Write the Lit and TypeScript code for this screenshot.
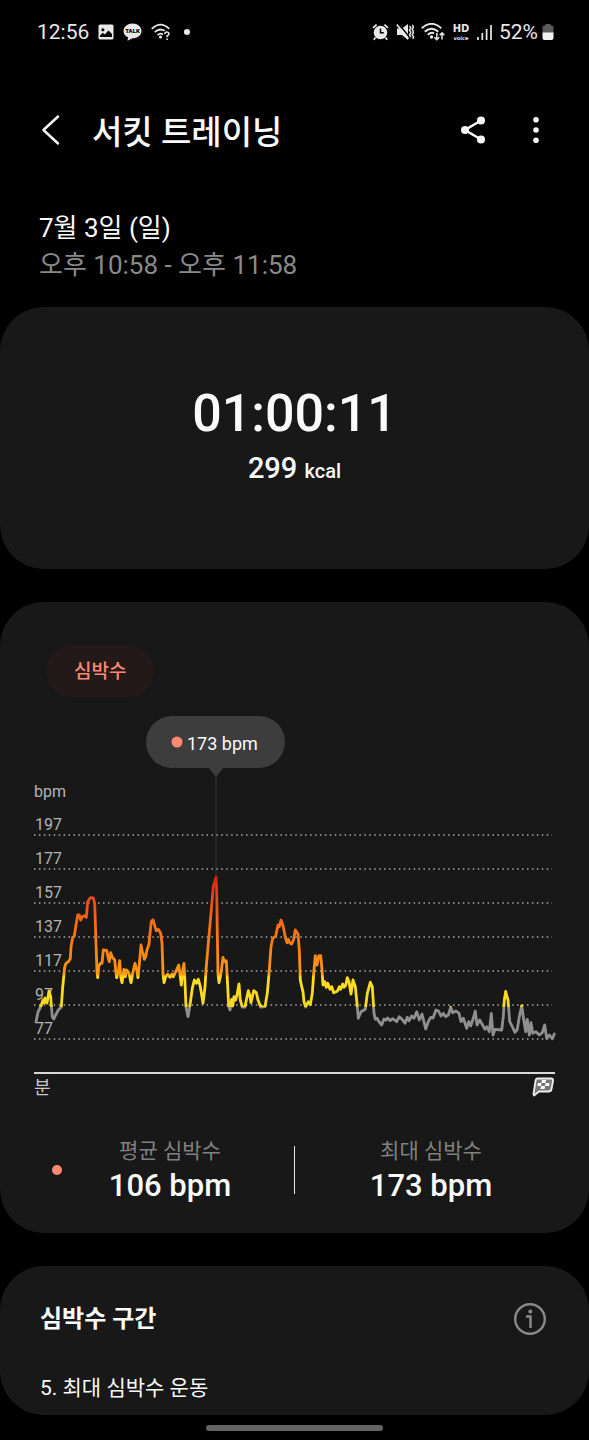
import { LitElement, html, svg, css } from "lit";
import { customElement } from "lit/decorators.js";

const GRID = [197, 177, 157, 137, 117, 97, 77];
const GRID_TOP = 125;
const GRID_STEP = 34;

// Heart rate trace, x/y pairs in chart units.
const TRACE =
  "36,312 38,302 41,296 43,290 44,293 45,288 47,293 49,281 50.7,287 51.3,295 52.3,307 53.7,309 56.7,303 58.3,300 61.3,297 62.7,277 64.7,257 66,253.3 68.3,251.7 70.3,248.7 71,237 72.7,227.3 74.3,226 76,215 77.7,205 79.3,205 80.7,210 82.3,206.7 84.3,205.7 86.3,207.3 87.7,191.7 90.3,187.7 93.3,188 94.7,193.3 96,233.3 97,261.7 97.7,267.7 98.7,256.7 100.3,253.3 102,253.3 103.3,240 106.7,240.3 108,247.3 109.3,251.7 110.7,242.7 112.3,247.3 114.7,250 115.7,260 116.7,267.7 118.3,261.7 119.7,250.7 120.7,266.7 122,272.7 124,259.3 125.3,266.7 126.7,260 129,263.3 131,272.7 132.7,263.3 135,253.3 136.7,260 138,267.7 139.7,250 141,235 142.3,241.7 143.3,244 144.3,249.3 145.7,246.7 147,240 149,234 150,223.3 151.3,211.7 153,209.7 155,216.7 156.3,220.7 158.3,219.3 160.7,223.3 162,233.3 163,263.3 164,272.7 165.7,266.7 167.7,264 170,267.3 172,264 173.3,266.7 175.3,262.7 178.7,255 180.3,266.7 181.3,275 182.7,260 184,253.3 185,273.3 186,296.7 188,306.7 190,295 192.3,278.3 194.3,270 196.3,273.3 198.3,269.3 200.3,276.7 201.7,285 203,293.3 205,277 206,260 208.3,233.3 211,203.3 213.3,176.7 216,167.3 216.7,180 217.3,223.3 218,263.3 219,272.7 221,263.3 223,247.3 224.3,251.7 226.3,250.7 227.7,276.7 228.7,296.7 230,300 231.7,289.3 232.7,296 234,286.7 235.7,290 237.3,283.3 239,274 240.3,290 242.3,297 245,297 246.7,288.3 248.3,280.7 249.7,285 251,292.7 252.3,286.7 253.7,280.7 256.3,282.7 258,290 260.7,297 265,296.7 267.3,283.3 269.3,260 271,236.7 272.7,228.3 275.7,226 278,215 279.3,216.7 281,210 283.3,216.7 285.3,227.3 287,232.7 288.3,229.3 290,233.3 291.7,234 293.7,229.3 295.3,220 298,224 299.3,240 300.3,270 301.7,276.7 303,281.7 304,291.7 305.7,297 308.3,291.7 310.3,294.7 312.3,283.3 313.7,263.3 315.3,245.7 317,255 318.7,246 320.7,245.7 322,260 323,275 324.7,271.7 326.3,277.3 327.7,273.3 330,279.3 331.7,276.7 333.7,282.7 337.3,281.3 339.3,276.7 340.7,279.3 342.7,274 344,277.3 345.7,275.3 347.3,267.7 349,271.7 351,284 353,270 355.3,276.7 357,293.3 358.3,308.3 361,301.7 365.3,299.3 367.3,283.3 370.3,272.3 372.3,276.7 374,303.3 375.3,309.3 377,308.3 379,311.7 381.7,315 384,309 386,310 387.7,308 390,310.7 392.7,308.7 396.7,311.7 399.3,306.7 402.7,310 405,313.3 407.3,307.3 409,310.7 411.7,306 414,308.3 416.7,301.7 419.3,310 422,304 425.7,319 428.3,311.7 430.7,307.3 433,308 436,300 438.7,301.3 441,306 443.3,303.3 445.7,306.7 448.3,305 450.7,297.3 452.7,302.7 456,301 459,303.3 461,311.7 463.3,308.3 466.7,318.3 468.7,311.7 470.7,316 473.3,308.3 475.3,301 477,315 479.7,310 482,314 485,319.3 486.7,316.7 489.3,321.7 491.3,303.3 493,325 495,319.3 501.7,320 503.3,306.7 504.3,290 505.7,281.5 508,290 509.7,311.7 512,316 515,322.3 517.3,319.3 519.3,306.7 521.7,295.7 523.3,306.7 525.7,321.7 527.3,309.3 529.3,325 531,312.7 532.7,323.3 536,321.7 539.3,325 542.3,322.7 544.7,315 546.7,328.3 549.3,325 552.3,328.7 554.3,324";

@customElement("status-bar")
class StatusBar extends LitElement {
  static styles = css`
    :host {
      display: flex;
      align-items: center;
      height: 64px;
      padding: 0 35px 0 37px;
      font-size: 21px;
      line-height: 24px;
      color: #e8e8e8;
    }
    svg {
      display: block;
      flex: none;
    }
    .side {
      display: flex;
      align-items: center;
      gap: 9px;
    }
    .right {
      margin-left: auto;
      gap: 7px;
    }
    .power {
      display: flex;
      align-items: center;
      gap: 4px;
    }
    .dot {
      width: 6px;
      height: 6px;
      border-radius: 50%;
      background: #e8e8e8;
      margin-left: 4px;
    }
    .talk {
      font-family: Roboto, sans-serif;
      font-weight: 900;
    }
    .voice {
      font-family: "DejaVu Sans", sans-serif;
      font-weight: 700;
    }
  `;

  render() {
    return html`
      <div class="side">
        <span>12:56</span>
        <svg width="16" height="18" viewBox="0 0 16 18" aria-hidden="true">
          <path fill="#e8e8e8" fill-rule="evenodd" d="M2 1.500h12q1.500 0 1.500 1.500v12q0 1.500-1.500 1.500H2Q.5 16.500.5 15V3Q.5 1.500 2 1.500zM2 14h12v-3l-3.500-3.500-3.800 4L4.800 9.800 2 12.500zM4.800 5.200a1.600 1.600 0 1 0 .1 0z"/>
        </svg>
        <svg width="19" height="18" viewBox="0 0 19 18" aria-hidden="true">
          <path fill="#e8e8e8" d="M9.500.5C14.600.5 18.500 3.800 18.500 8s-3.900 7.300-9 7.300L4.500 17.800 5 14.300C2.200 13 .5 10.700.5 8 .5 3.800 4.500.5 9.500.5z"/>
          <text class="talk" x="9.500" y="10" font-size="6" text-anchor="middle" fill="#000">TALK</text>
        </svg>
        <svg width="20" height="18" viewBox="0 0 20 18" aria-hidden="true">
          <g fill="none" stroke="#e8e8e8" stroke-width="1.800">
            <path d="M.8 5.800Q9.500-2.600 18.300 5.800M3.800 9.200Q9.500 3.700 15.300 9.200M6.500 12.200Q9.500 9.500 12 11.500"/>
          </g>
          <circle cx="9.500" cy="14" r="1.600" fill="#e8e8e8"/>
          <path fill="none" stroke="#000" stroke-width="4" d="M14 11q.2-2 2-2t2 1.800q0 1.200-1.800 2.200v1"/>
          <path fill="none" stroke="#e8e8e8" stroke-width="1.600" d="M13.800 11q.2-2 2.100-2t2.100 1.800q0 1.200-1.900 2.200v1.200M16.100 15.500v1.600"/>
        </svg>
        <span class="dot"></span>
      </div>
      <div class="side right">
        <svg width="17" height="18" viewBox="0 0 17 18" aria-hidden="true">
          <g fill="none" stroke="#e8e8e8" stroke-width="1.800">
            <path d="M1 4.800 4.600 1.600M16 4.800 12.400 1.600M3.500 14.500 1.800 16.800M13.500 14.500l1.700 2.300"/>
          </g>
          <circle cx="8.500" cy="9.500" r="6.800" fill="#e8e8e8"/>
          <path fill="none" stroke="#000" stroke-width="1.500" d="M8.500 5.500v4.300h3.300"/>
        </svg>
        <svg width="18" height="18" viewBox="0 0 18 18" aria-hidden="true">
          <path fill="#e8e8e8" d="M1 5.500h5L12 1v16l-6-5H1z"/>
          <path stroke="#000" stroke-width="1.500" d="M2.500 1 13 13.500"/>
          <path stroke="#e8e8e8" stroke-width="1.600" d="M.8 1.500 12.500 15.800"/>
          <path fill="none" stroke="#e8e8e8" stroke-width="1.500" d="m13.500 3 1.300 2-1.300 2 1.300 2.300-1.300 2.500 1.300 2.400M16.300 2l1.200 2-1.200 2.500 1.200 2.500-1.200 2.500 1.200 2.500-.8 1.800"/>
        </svg>
        <svg width="24" height="18" viewBox="0 0 24 18" aria-hidden="true">
          <g fill="none" stroke="#e8e8e8" stroke-width="1.900">
            <path d="M.8 5.200Q10.500-3.600 20.300 5.200M3.800 8.700Q10.500 2.600 17.300 8.700M6.700 11.800q3.800-3.200 6.300-1.400"/>
          </g>
          <circle cx="10.500" cy="14" r="1.700" fill="#e8e8e8"/>
          <path fill="none" stroke="#e8e8e8" stroke-width="1.500" d="M15.800 10v6.500M13.300 14.200l2.500 2.500 2.400-2.500M21 16.500V10M18.800 12.200 21 9.800l2.300 2.400"/>
        </svg>
        <svg width="18" height="18" viewBox="0 0 18 18" aria-hidden="true">
          <text class="voice" x="9" y="9" font-size="10" text-anchor="middle" fill="#e8e8e8">HD</text>
          <text class="voice" x="9" y="17" font-size="5" text-anchor="middle" fill="#e8e8e8">voice</text>
        </svg>
        <svg width="15" height="18" viewBox="0 0 15 18" aria-hidden="true">
          <path stroke="#e8e8e8" stroke-width="1.700" d="M1 17v-3M5.300 17v-7M9.600 17V6M14 17V2"/>
        </svg>
        <div class="power">
          <span>52%</span>
          <svg width="12" height="18" viewBox="0 0 12 18" aria-hidden="true">
            <path fill="#5a5a5a" d="M3.500 1h5v1.500H10q1.500 0 1.500 1.500v6H.5V4Q.5 2.500 2 2.500h1.500z"/>
            <path fill="#f2f2f2" d="M.5 9.500h11V15q0 2-2 2h-7q-2 0-2-2z"/>
          </svg>
        </div>
      </div>
    `;
  }
}

@customElement("heart-chart")
class HeartChart extends LitElement {
  static styles = css`
    :host {
      display: block;
    }
    .chart {
      display: block;
      width: 100%;
      height: auto;
      font-family: Roboto, "Noto Sans CJK KR", sans-serif;
    }
    .axis {
      font-size: 16px;
      fill: #b4b4b4;
    }
    .unit {
      font-size: 18px;
      fill: #c8c8c8;
    }
    .tip {
      font-size: 18px;
      fill: #fafafa;
    }
    .grid {
      stroke: #a8a8a8;
      stroke-width: 1.5;
      stroke-dasharray: 1.5 3.43;
    }
    .trace {
      fill: none;
      stroke: url(#zones);
      stroke-width: 2.8;
      stroke-linejoin: round;
      stroke-linecap: round;
    }
  `;

  render() {
    return html`
      <svg class="chart" viewBox="0 0 589 394" role="img" aria-label="심박수">
        <defs>
          <linearGradient id="zones" gradientUnits="userSpaceOnUse" x1="0" y1="165" x2="0" y2="330">
            <stop offset="0" stop-color="#d4200c" />
            <stop offset=".14" stop-color="#e64a19" />
            <stop offset=".28" stop-color="#f56a14" />
            <stop offset=".6" stop-color="#fb9a14" />
            <stop offset=".62" stop-color="#ffdf1e" />
            <stop offset=".8" stop-color="#f8d820" />
            <stop offset=".8" stop-color="#8f8f8f" />
          </linearGradient>
        </defs>
        <path d="M216 60V170" stroke="#272727" stroke-width="2" />
        <rect x="146" y="6" width="139" height="52" rx="26" fill="#3d3d3d" />
        <path d="M208 57h16l-8 10z" fill="#3d3d3d" />
        <circle cx="177" cy="32" r="5.5" fill="#ff8a73" />
        <text class="tip" x="187" y="40">173 bpm</text>
        <text class="axis" x="34" y="87">bpm</text>
        ${GRID.map((label, i) => {
          const y = GRID_TOP + i * GRID_STEP;
          return svg`
            <path class="grid" d="M34 ${y}H552" />
            <text class="axis" x="35" y=${y - 5}>${label}</text>`;
        })}
        <polyline class="trace" points=${TRACE} />
        <path d="M34 363H555" stroke="#d8d8d8" stroke-width="2" />
        <text class="unit" x="34" y="384">분</text>
        <g transform="translate(532 367)">
          <path d="M5.500 1.500H19q2.500 0 2 2.500l-1.500 8q-.4 2.500-3 2.500H7L2 18.500 1.500 17 3.500 4Q4 1.500 5.500 1.500z" fill="#777" stroke="#eee" stroke-width="1.800" stroke-linejoin="round" />
          <path fill="#fff" d="M10 3h4l-.5 3h-4zM5.800 6h3.700L9 9H5.300zM13.500 6h4L17 9h-4zM9 9h4l-.5 3h-4z" />
        </g>
      </svg>
    `;
  }
}

@customElement("app-root")
class AppRoot extends LitElement {
  static styles = css`
    :host {
      display: block;
      min-height: 100vh;
      background: #000;
      color: #fafafa;
      font-family: Roboto, "Noto Sans CJK KR", sans-serif;
    }
    * {
      box-sizing: border-box;
    }
    h1,
    h2,
    p {
      margin: 0;
    }
    button {
      margin: 0;
      padding: 0;
      border: 0;
      background: none;
      color: inherit;
      font: inherit;
      cursor: pointer;
    }
    svg {
      display: block;
    }
    .bar {
      display: flex;
      align-items: center;
      padding: 39px 40px 0 38px;
    }
    .back {
      width: 54px;
    }
    .title {
      flex: 1;
      padding-top: 6px;
      font-size: 33px;
      font-weight: 500;
      line-height: 48px;
    }
    .more {
      margin-left: 36px;
    }
    .when {
      padding: 53px 39px 23px;
      font-size: 26px;
      line-height: 37px;
    }
    .hours {
      color: #8a8a8a;
    }
    .card {
      border-radius: 44px;
      background: #181818;
    }
    .card + .card {
      margin-top: 33px;
    }
    .total {
      padding: 77px 24px 81px;
      text-align: center;
    }
    .time {
      font-size: 52px;
      font-weight: 500;
      line-height: 60px;
    }
    .energy {
      margin-top: 4px;
      font-size: 29px;
      font-weight: 500;
      line-height: 40px;
    }
    .kcal {
      font-size: 20px;
      line-height: 20px;
    }
    .heart {
      padding: 43px 0 28px;
    }
    .chip {
      display: block;
      height: 52px;
      margin: 0 46px 13px;
      padding: 0 28px 4px;
      border-radius: 26px;
      background: #221918;
      color: #ff8a73;
      font-size: 19px;
      font-weight: 500;
    }
    .stats {
      display: grid;
      grid-template-columns: 1fr 1px 1fr;
      align-items: center;
      padding-top: 31px;
      text-align: center;
    }
    .average {
      display: flex;
      align-items: center;
      padding: 0 16px 0 52px;
    }
    .dot {
      width: 10px;
      height: 10px;
      border-radius: 50%;
      background: #ff8a73;
    }
    .stat {
      flex: 1;
    }
    .peak {
      padding-right: 22px;
    }
    .rule {
      height: 48px;
      background: #e8e8e8;
    }
    .name {
      color: #808080;
      font-size: 21px;
      line-height: 32px;
    }
    .value {
      font-size: 31px;
      font-weight: 500;
      line-height: 38px;
    }
    .zones {
      padding: 36px 42px 11px 40px;
    }
    .head {
      display: flex;
      align-items: center;
      justify-content: space-between;
      margin-bottom: 36px;
    }
    .subtitle {
      font-size: 24px;
      font-weight: 700;
      line-height: 34px;
    }
    .zone {
      font-size: 21px;
      line-height: 32px;
    }
    .home {
      width: 30%;
      height: 6px;
      margin: 10px auto 0;
      border-radius: 3px;
      background: #636363;
    }
  `;

  render() {
    return html`
      <status-bar></status-bar>
      <header class="bar">
        <button class="back" aria-label="뒤로">
          <svg width="24" height="34" viewBox="0 0 24 34">
            <path d="M20 3.500 5.500 17 20 30.500" fill="none" stroke="#f4f4f4" stroke-width="2.500" stroke-linecap="round" stroke-linejoin="round" />
          </svg>
        </button>
        <h1 class="title">서킷 트레이닝</h1>
        <button aria-label="공유">
          <svg width="26" height="28" viewBox="0 0 26 28">
            <path d="M20 4.500 4 14 20 23.500" fill="none" stroke="#f8f8f8" stroke-width="2.500" />
            <g fill="#f8f8f8">
              <circle cx="20" cy="4.500" r="4" />
              <circle cx="4" cy="14" r="4" />
              <circle cx="20" cy="23.500" r="4" />
            </g>
          </svg>
        </button>
        <button class="more" aria-label="더보기">
          <svg width="26" height="28" viewBox="0 0 26 28">
            <g fill="#f8f8f8">
              <circle cx="13" cy="3.800" r="2.800" />
              <circle cx="13" cy="14" r="2.800" />
              <circle cx="13" cy="24.200" r="2.800" />
            </g>
          </svg>
        </button>
      </header>
      <div class="when">
        <p>7월 3일 (일)</p>
        <p class="hours">오후 10:58 - 오후 11:58</p>
      </div>
      <section class="card total">
        <p class="time">01:00:11</p>
        <p class="energy">299 <span class="kcal">kcal</span></p>
      </section>
      <section class="card heart">
        <button class="chip">심박수</button>
        <heart-chart></heart-chart>
        <div class="stats">
          <div class="average">
            <span class="dot"></span>
            <div class="stat">
              <p class="name">평균 심박수</p>
              <p class="value">106 bpm</p>
            </div>
          </div>
          <div class="rule"></div>
          <div class="peak">
            <p class="name">최대 심박수</p>
            <p class="value">173 bpm</p>
          </div>
        </div>
      </section>
      <section class="card zones">
        <div class="head">
          <h2 class="subtitle">심박수 구간</h2>
          <button aria-label="정보">
            <svg width="34" height="34" viewBox="0 0 34 34">
              <g fill="none" stroke="#8a8a8a" stroke-width="2.400">
                <circle cx="17" cy="17" r="14.800" />
                <path d="M13 14.500H17.500V26" />
              </g>
              <circle cx="17.300" cy="9.500" r="2" fill="#8a8a8a" />
            </svg>
          </button>
        </div>
        <p class="zone">5. 최대 심박수 운동</p>
      </section>
      <div class="home"></div>
    `;
  }
}
